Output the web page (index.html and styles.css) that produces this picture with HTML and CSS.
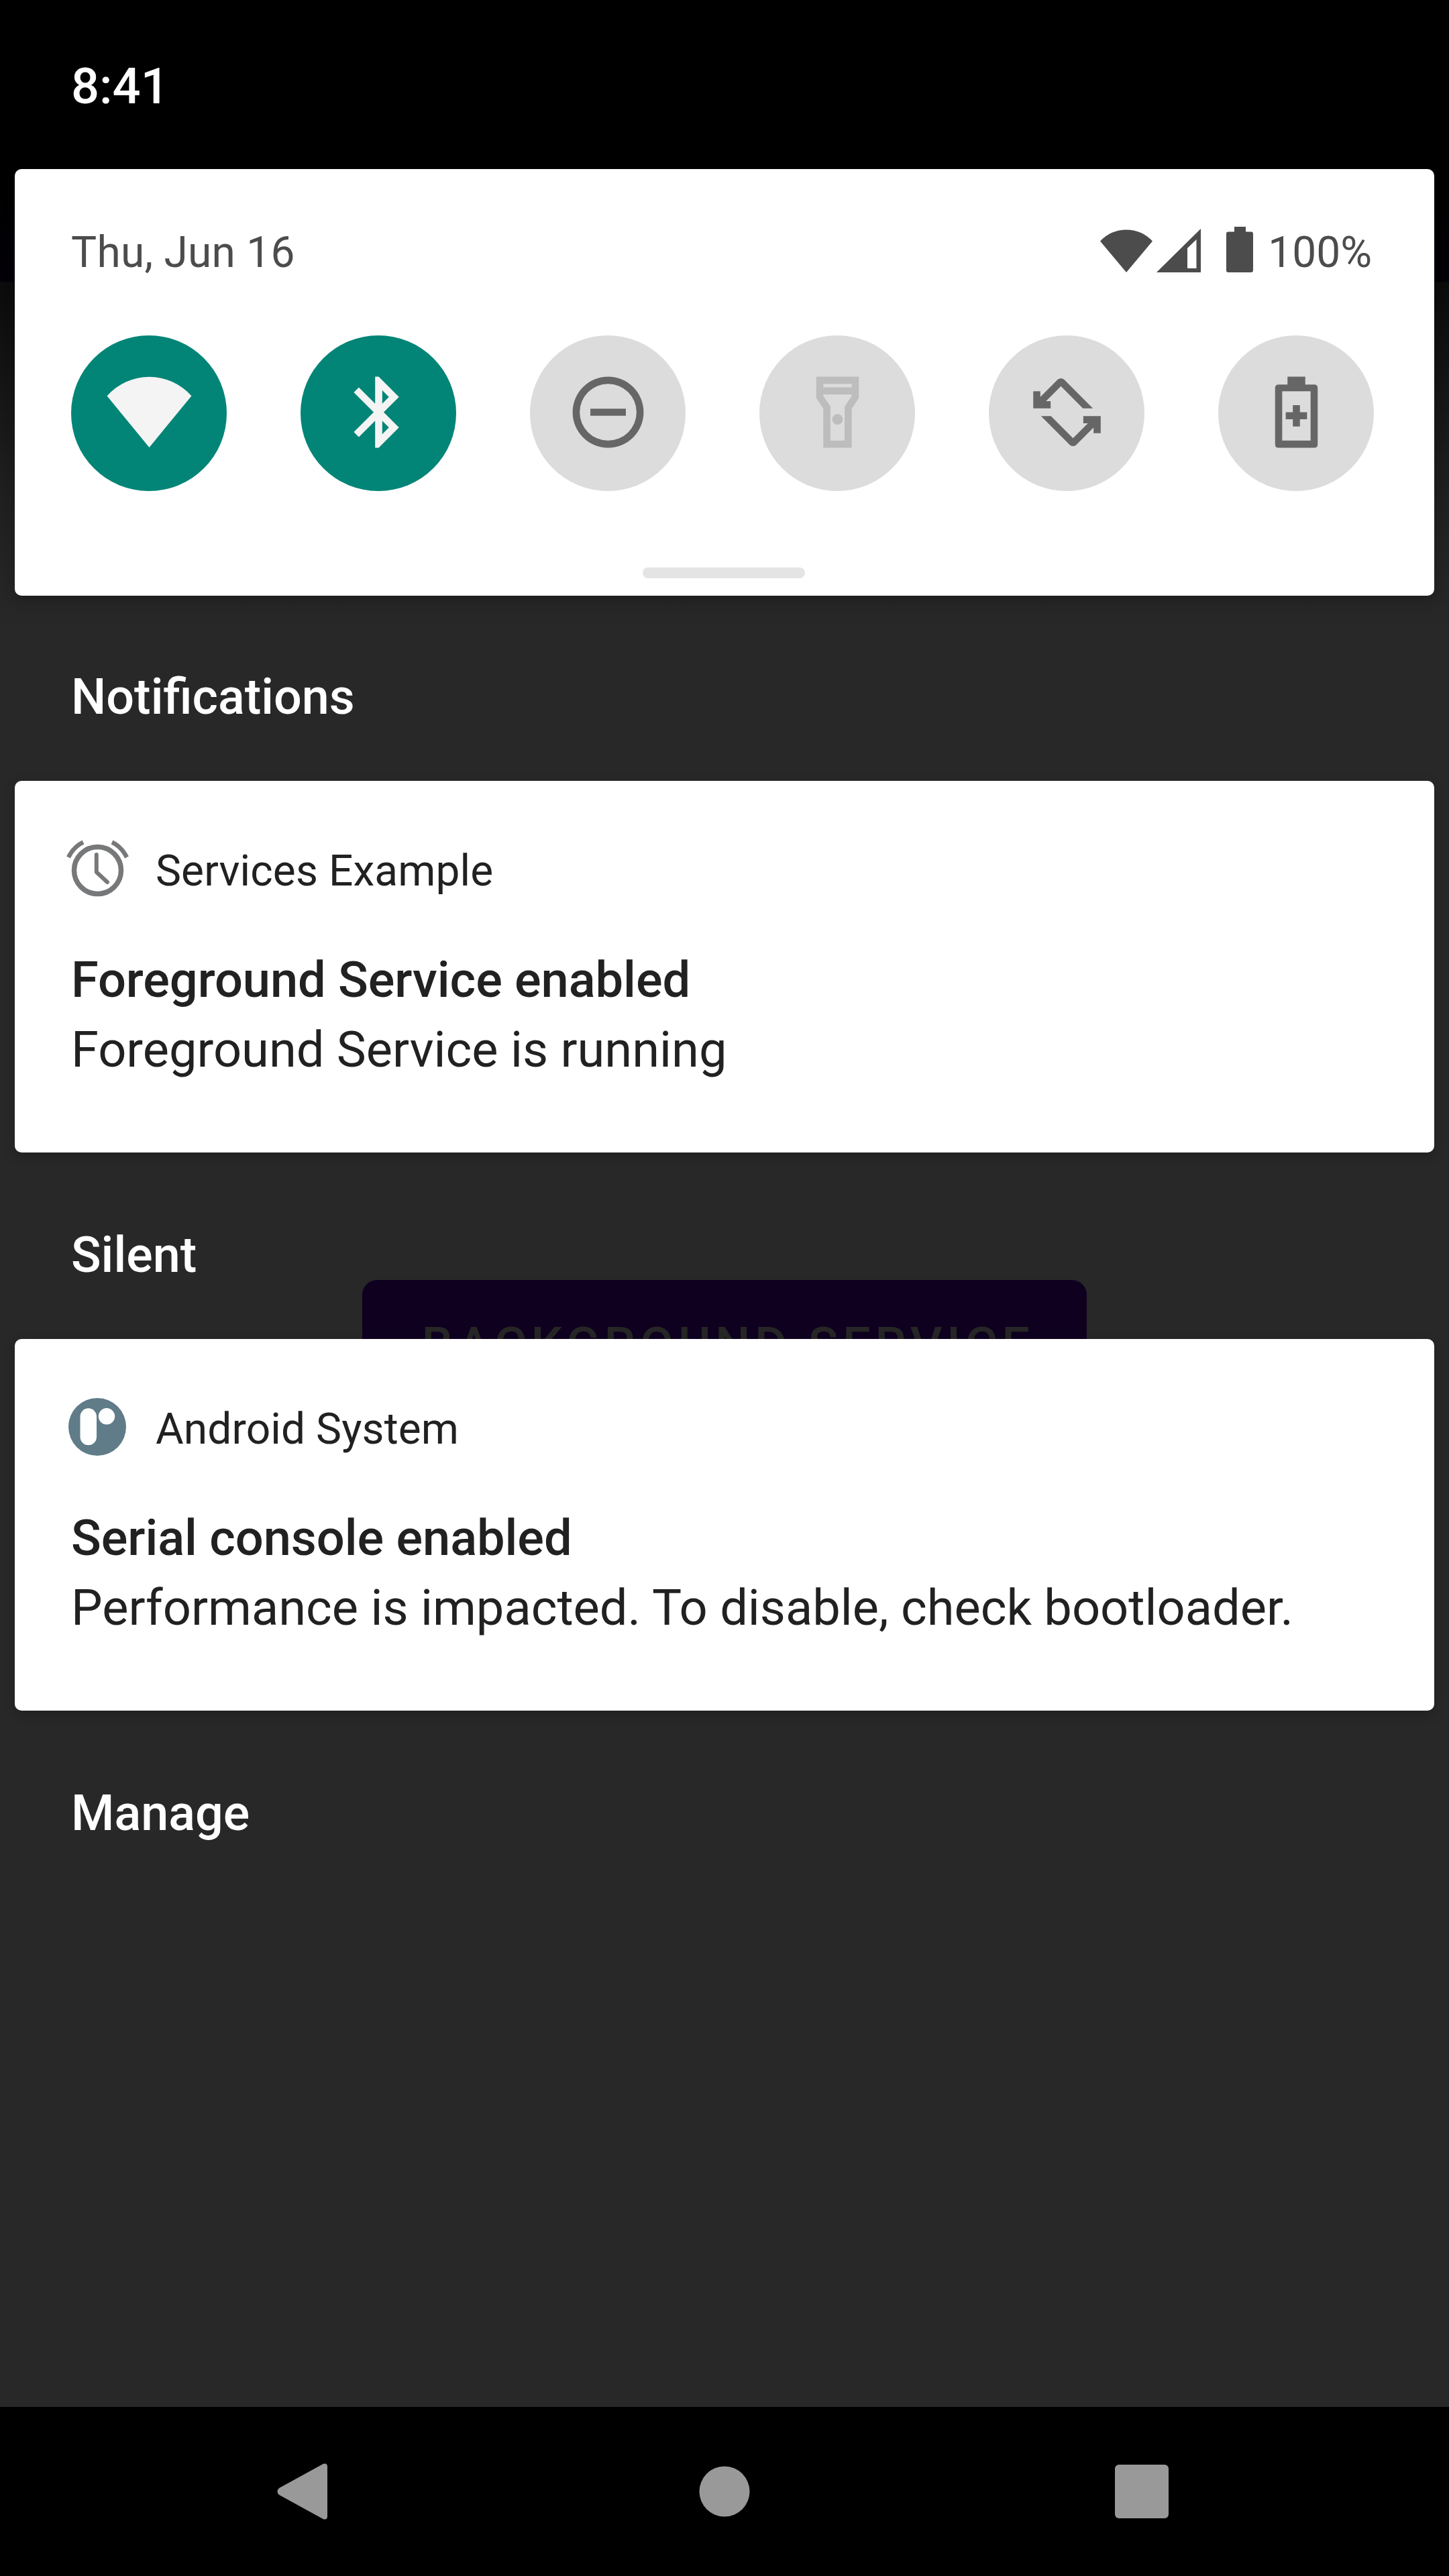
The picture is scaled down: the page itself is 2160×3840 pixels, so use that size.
FILE: index.html
```html
<!DOCTYPE html>
<html lang="en">
<head>
<meta charset="utf-8">
<title>Notification shade</title>
<link rel="stylesheet" href="styles.css">
</head>
<body>
<div class="screen">
  <div class="app-button">BACKGROUND SERVICE</div>
  <header class="status-bar"><span class="clock">8:41</span></header>
  <main class="shade">
    <section class="card quick-settings">
      <div class="qs-header">
        <span class="date">Thu, Jun 16</span>
        <div class="system-icons">
          <svg class="wifi" viewBox="0 0 78 66"><path d="M0 19.5A53 53 0 0 1 78 19.5L39 66Z"/></svg>
          <svg class="signal" viewBox="0 0 66 65"><path fill-rule="evenodd" d="M66 0V65H0ZM59.500 16L46 29V59H59.500Z"/></svg>
          <svg class="battery" viewBox="0 0 40 68"><path d="M12 0H29V7.500H37Q40 7.500 40 10.500V65Q40 68 37 68H3Q0 68 0 65V10.500Q0 7.500 3 7.500H12Z"/></svg>
          <span class="percent">100%</span>
        </div>
      </div>
      <div class="tiles">
        <div class="tile on"><svg viewBox="0 0 24 24"><path d="M.1 7.400A15.900 15.900 0 0 1 23.900 7.400L12 21.900Z"/></svg></div>
        <div class="tile on"><svg viewBox="0 0 24 24"><path d="M17.710 7.710L12 2h-1v7.590L6.410 5 5 6.410 10.590 12 5 17.590 6.410 19 11 14.410V22h1l5.710-5.710L13.410 12l4.300-4.290zM13 5.830l1.880 1.880L13 9.590V5.830zM14.880 16.290L13 18.170v-3.760l1.880 1.880z"/></svg></div>
        <div class="tile"><svg viewBox="0 0 24 24"><path fill-rule="evenodd" d="M12 2a10 10 0 1 0 0 20 10 10 0 0 0 0-20zm0 18a8 8 0 1 1 0-16 8 8 0 0 1 0 16zM7 11h10v2H7z"/></svg></div>
        <div class="tile disabled"><svg viewBox="0 0 24 24"><path fill-rule="evenodd" d="M6 2v6l2 3v11h8V11l2-3V2H6zM16 4v1H8V4h8zM14 10.400V20h-4v-9.600L8 7.400V7h8v.400l-2 3z"/><circle cx="12" cy="14" r="1.500"/></svg></div>
        <div class="tile"><svg viewBox="0 0 24 24"><path id="turn" d="M19.300 10.900L11.200 2.800Q10.300 2.100 9.400 2.800L4.500 7.700V6.100H2.500V10.900H7.400V8.900H6.100L10.300 4.700 16.500 10.900Z"/><use href="#turn" transform="rotate(180 12 12)"/></svg></div>
        <div class="tile"><svg viewBox="0 0 24 24"><path fill-rule="evenodd" d="M9.500 2h5v2.200H17q1 0 1 1V21q0 1-1 1H7q-1 0-1-1V5.200q0-1 1-1h2.500zM8 6.100V20h8V6.100z"/><path d="M11 10h2v2h2v2h-2v2h-2v-2H9v-2h2z"/></svg></div>
      </div>
      <div class="drag-handle"></div>
    </section>
    <h2 class="section-title">Notifications</h2>
    <article class="card notification">
      <div class="app-row">
        <svg class="app-icon" viewBox="0 0 96 88"><g fill="none" stroke="#777879" stroke-linecap="round"><circle cx="48.500" cy="43.500" r="35" stroke-width="7.500"/><path d="M27 1.500Q13 8 5 24M70 1.500Q84 8 92 24" stroke-width="6.500" stroke-linecap="butt"/><path d="M46.800 20V46L63 61" stroke-width="6" stroke-linejoin="round"/></g></svg>
        <span class="app-name">Services Example</span>
      </div>
      <h3 class="title">Foreground Service enabled</h3>
      <p class="text">Foreground Service is running</p>
    </article>
    <h2 class="section-title silent">Silent</h2>
    <article class="card notification">
      <div class="app-row">
        <svg class="app-icon" viewBox="0 0 96 88"><circle cx="48" cy="41" r="43" fill="#5f7c88"/><rect x="22.500" y="13.300" width="24.500" height="55" rx="12.250" fill="#fff"/><circle cx="62" cy="25.300" r="12.200" fill="#fff"/></svg>
        <span class="app-name">Android System</span>
      </div>
      <h3 class="title">Serial console enabled</h3>
      <p class="text">Performance is impacted. To disable, check bootloader.</p>
    </article>
    <h2 class="section-title silent">Manage</h2>
  </main>
  <nav class="nav-bar">
    <svg class="back" viewBox="0 0 84 84"><path d="M7 37L73 .8Q79 -1 79 5V79Q79 85 73 83.200L7 47Q2 42 7 37Z"/></svg>
    <svg viewBox="0 0 84 84"><circle cx="42" cy="42" r="37.500"/></svg>
    <svg viewBox="0 0 84 84"><rect x="2" y="2" width="80" height="80" rx="6"/></svg>
  </nav>
</div>
</body>
</html>
```
FILE: styles.css
```css
* { box-sizing: border-box; margin: 0; padding: 0; }
body { background: #000; font-family: Roboto, "Liberation Sans", sans-serif; }
svg { display: block; overflow: visible; fill: currentColor; }
.screen {
  position: relative;
  display: flex;
  flex-direction: column;
  width: 2160px;
  height: 3840px;
  overflow: hidden;
  background: linear-gradient(#000 0, #000 252px, #030007 420px, #0b0b0b 420px, #1e1e1e 720px, #262626 900px, #282828 960px);
}
/* button of the app that shows through behind the shade */
.app-button {
  position: absolute;
  left: 540px;
  top: 1908px;
  width: 1080px;
  height: 190px;
  padding-left: 10px;
  border-radius: 22px;
  background: #0f0020;
  color: #262626;
  font-size: 74px;
  font-weight: 500;
  line-height: 196px;
  letter-spacing: 6.5px;
  text-align: center;
  white-space: nowrap;
}
.status-bar { height: 252px; padding: 93px 106px 0; color: #fff; }
.clock { display: block; font-size: 74px; font-weight: 500; line-height: 72px; }
.shade { position: relative; flex: 1; padding: 0 22px; }
.card { background: #fff; border-radius: 10px; box-shadow: 0 6px 18px rgba(0, 0, 0, .2); }
.quick-settings { height: 636px; padding: 92px 90px 0 84px; }
.qs-header { display: flex; justify-content: space-between; height: 65px; color: #4c4c4c; font-size: 64px; line-height: 65px; }
.date { letter-spacing: .25px; }
.system-icons { display: flex; align-items: flex-start; padding-right: 3px; }
.wifi { width: 78px; height: 66px; margin: -4px 6px 0 0; }
.signal { width: 66px; height: 65px; margin: -3px 38px 0 0; }
.battery { width: 40px; height: 68px; margin: -6px 22px 0 0; }
.tiles { display: flex; justify-content: space-between; margin-top: 91px; }
.tile { width: 232px; height: 232px; padding: 51px 52.5px; border-radius: 50%; background: #dcdcdc; color: #666; }
.tile svg { width: 127px; height: 127px; }
.tile.on { background: #028577; color: #f4f4f4; }
.tile.disabled { color: #bdbdbd; }
.drag-handle { width: 242px; height: 16px; margin: 114px 0 0 852px; border-radius: 8px; background: #e4e4e4; }
.section-title { height: 276px; padding: 115px 84px 0; color: #fff; font-size: 73.7px; font-weight: 500; line-height: 72px; }
.section-title.silent { height: 278px; padding-top: 117px; }
.notification { height: 554px; padding: 90px 84px 0; color: #212121; }
.app-row { display: flex; align-items: center; gap: 39px; height: 88px; margin-left: -9px; }
.app-icon { width: 96px; height: 88px; }
.app-name { padding-top: 2px; font-size: 64px; line-height: 88px; letter-spacing: .1px; }
.title { margin-top: 67px; font-size: 74px; font-weight: 500; line-height: 104px; letter-spacing: -.06px; }
.text { font-size: 74px; line-height: 104px; }
.nav-bar { position: relative; display: flex; justify-content: center; gap: 538px; height: 252px; padding-top: 84px; background: #000; color: #999; }
.nav-bar svg { width: 84px; height: 84px; }
.nav-bar .back { margin: 0 7px 0 -7px; }
```
